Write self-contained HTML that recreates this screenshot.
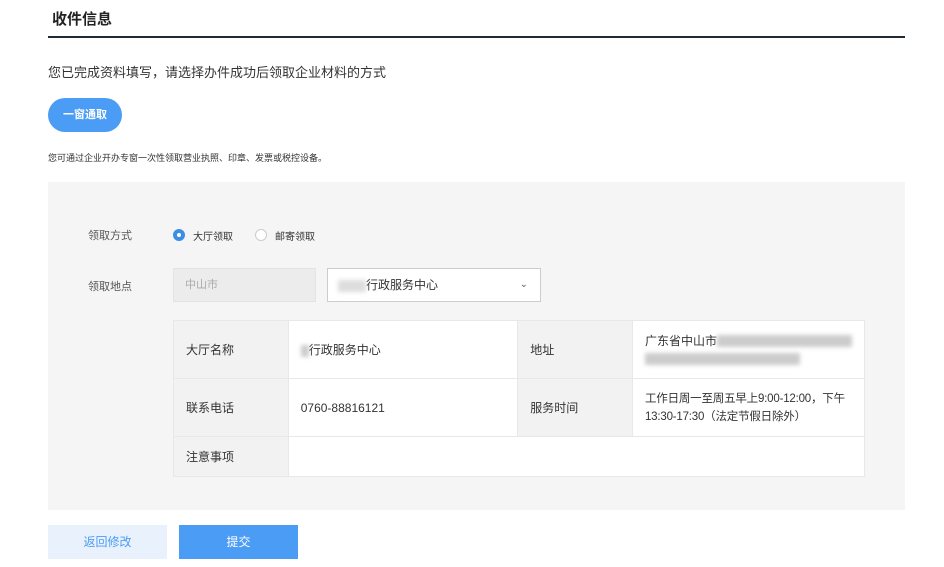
<!DOCTYPE html>
<html><head><meta charset="utf-8"><style>
body{margin:0;width:944px;height:567px;background:#fff;font-family:"Liberation Sans","Noto Sans CJK SC",sans-serif;color:#333;position:relative;overflow:hidden}
.a{position:absolute}
.t td{border:1px solid #e8e8e8;font-size:12px;color:#333;padding:0 12px}
.g{background:#f2f2f2}
.blur{display:inline-block;background:#ccc;filter:blur(2px);vertical-align:middle}
</style></head><body>
<div class="a" style="left:52px;top:8px;font-size:15px;font-weight:bold;color:#222">收件信息</div>
<div class="a" style="left:48px;top:36px;width:857px;height:2px;background:#1f2a33"></div>
<div class="a" style="left:48px;top:62px;font-size:13px;color:#333">您已完成资料填写，请选择办件成功后领取企业材料的方式</div>
<div class="a" style="left:48px;top:98px;width:74px;height:34px;border-radius:17px;background:#4b9cf5;color:#fff;font-size:11px;font-weight:bold;text-align:center;line-height:34px">一窗通取</div>
<div class="a" style="left:48px;top:151px;font-size:9px;color:#333">您可通过企业开办专窗一次性领取营业执照、印章、发票或税控设备。</div>
<div class="a" style="left:48px;top:182px;width:857px;height:328px;background:#f5f5f5"></div>
<div class="a" style="left:88px;top:227px;font-size:11px;color:#555">领取方式</div>
<div class="a" style="left:173px;top:229px;width:10px;height:10px;border-radius:50%;border:1px solid #3a8ee6;background:#3a8ee6"><div style="width:4px;height:4px;background:#fff;border-radius:50%;margin:3px"></div></div>
<div class="a" style="left:193px;top:228px;font-size:10px;color:#333">大厅领取</div>
<div class="a" style="left:255px;top:229px;width:10px;height:10px;border-radius:50%;border:1px solid #ccc;background:#fff"></div>
<div class="a" style="left:275px;top:228px;font-size:10px;color:#333">邮寄领取</div>
<div class="a" style="left:88px;top:278px;font-size:11px;color:#555">领取地点</div>
<div class="a" style="left:173px;top:268px;width:143px;height:34px;background:#ececec;border:1px solid #e3e3e3;box-sizing:border-box;font-size:11px;color:#aaa;line-height:32px;padding-left:11px">中山市</div>
<div class="a" style="left:327px;top:268px;width:214px;height:34px;background:#fff;border:1px solid #ccc;box-sizing:border-box;font-size:12px;line-height:32px;padding-left:10px"><span class="blur" style="width:28px;height:12px;background:#ddd"></span>行政服务中心<span style="position:absolute;right:12px;top:0;font-size:10px;color:#666">⌄</span></div>
<table class="t a" style="left:173px;top:320px;width:692px;border-collapse:collapse;background:#fff">
<tr style="height:58px"><td class="g" style="width:90px">大厅名称</td><td style="width:205px"><span class="blur" style="width:8px;height:12px"></span>行政服务中心</td><td class="g" style="width:90px">地址</td><td style="line-height:18px;white-space:nowrap">广东省中山市<span class="blur" style="width:135px;height:12px"></span><br><span class="blur" style="width:155px;height:12px"></span></td></tr>
<tr style="height:58px"><td class="g">联系电话</td><td>0760-88816121</td><td class="g">服务时间</td><td style="line-height:18px;white-space:nowrap;font-size:11.5px;letter-spacing:-0.2px">工作日周一至周五早上9:00-12:00，下午<br>13:30-17:30（法定节假日除外）</td></tr>
<tr style="height:40px"><td class="g">注意事项</td><td colspan="3"></td></tr>
</table>
<div class="a" style="left:48px;top:525px;width:119px;height:34px;background:#e8f1fc;color:#4b9cf5;font-size:12px;text-align:center;line-height:34px">返回修改</div>
<div class="a" style="left:179px;top:525px;width:119px;height:34px;background:#4b9cf5;color:#fff;font-size:12px;text-align:center;line-height:34px">提交</div>
</body></html>
